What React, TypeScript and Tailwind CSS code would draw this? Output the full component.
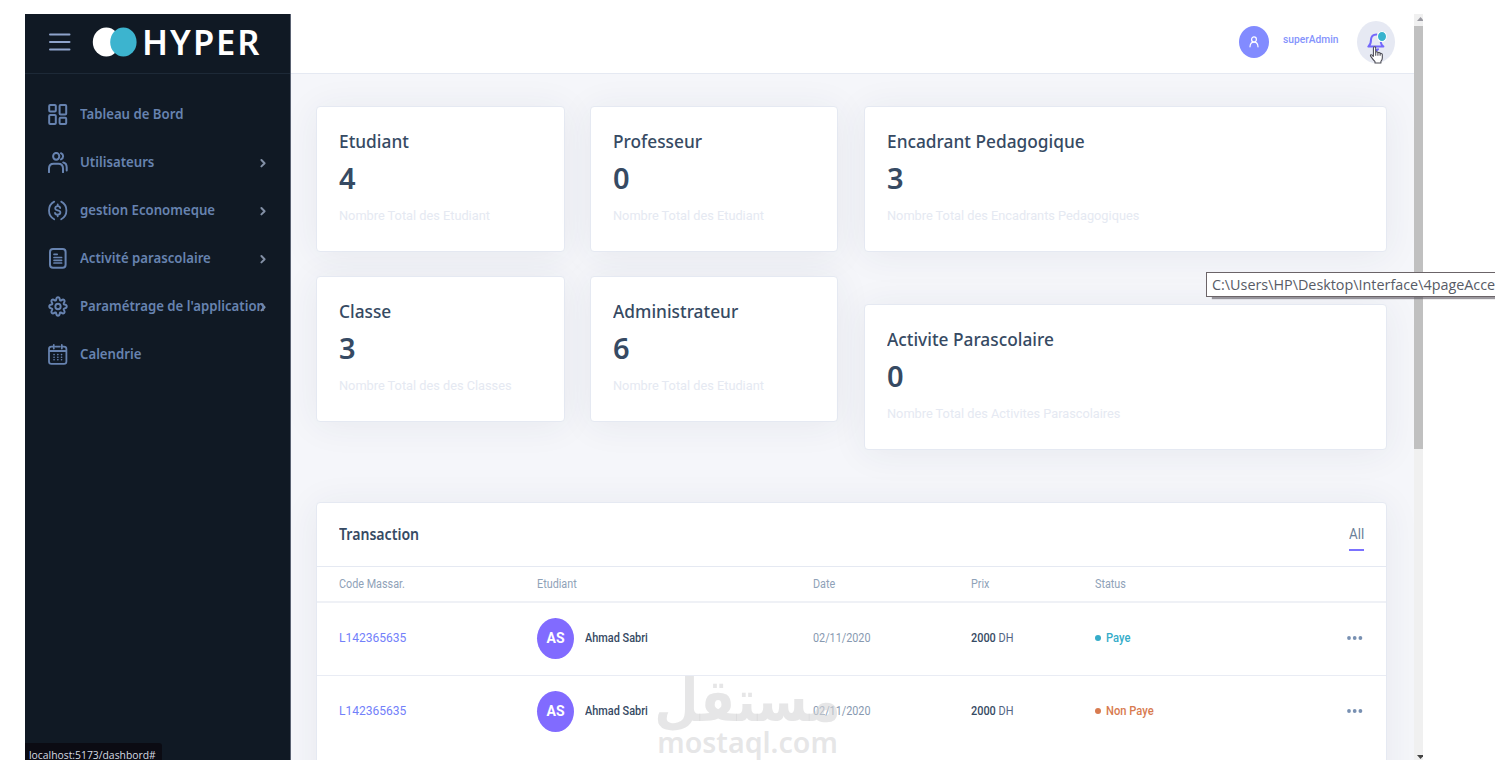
import type { ReactNode } from "react";

const stroke = {
  fill: "none",
  stroke: "currentColor",
  strokeWidth: 2,
  strokeLinecap: "round" as const,
  strokeLinejoin: "round" as const,
};

const DashboardIcon = () => (
  <svg viewBox="0 0 20 21" className="w-5 h-[21px]" {...stroke}>
    <rect x="1.2" y="1" width="6.6" height="6.6" rx="1" />
    <rect x="11.6" y="1" width="6.6" height="9.4" rx="1" />
    <rect x="1.2" y="11" width="6.6" height="9" rx="1" />
    <rect x="11.6" y="13.8" width="6.6" height="6.2" rx="1" />
  </svg>
);

const UsersIcon = () => (
  <svg viewBox="0 0 20 21" className="w-5 h-[21px]" {...stroke}>
    <ellipse cx="8.2" cy="4.3" rx="3.1" ry="3.4" />
    <path d="M1 20.2v-3.7q0-4.8 4.6-4.8h4.8q4.6 0 4.6 4.8v3.7" />
    <path d="M13 1.2a3.2 3.3 0 0 1 0 6.2M15.2 10.4q3.5.6 3.5 5v3" />
  </svg>
);

const MoneyIcon = () => (
  <svg viewBox="0 0 20 21" className="w-5 h-[21px]" {...stroke} strokeWidth={1.8}>
    <path d="M6.2 1.6Q1 4.4 1 10.4t5.2 8.8M13.2 1.6q5.2 2.8 5.2 8.8t-5.2 8.8" />
    <path d="M12.2 8q-.3-1.8-2.5-1.8T7.2 8.2q0 1.7 2.5 2.1 2.7.4 2.7 2.3 0 2-2.7 2-2.5 0-2.7-1.8M9.7 4.5v1.7M9.7 14.6v1.7" />
  </svg>
);

const ActivityIcon = () => (
  <svg viewBox="0 0 20 21" className="w-5 h-[21px]" {...stroke}>
    <rect x="2" y="1" width="15.6" height="18.8" rx="3" />
    <path d="M6 6.3h3.2M6 9.5h7.6M6 12.3h7.6M6 15h7.6" strokeWidth="1.7" />
  </svg>
);

const SettingsIcon = () => (
  <svg viewBox="0 0 24 24" className="w-5 h-[21px]" preserveAspectRatio="none" {...stroke} strokeWidth={2.3}>
    <circle cx="12" cy="12" r="3.2" />
    <path d="M9.8 4.2c.5-3.6 3.9-3.6 4.4 0 .2.9 1 1.2 1.8.8 2.8-2.2 5.2.2 3 3-.5.8-.1 1.6.8 1.8 3.6.5 3.6 3.9 0 4.4-.9.2-1.3 1-.8 1.8 2.2 2.8-.2 5.2-3 3-.8-.5-1.6-.1-1.8.8-.5 3.6-3.9 3.6-4.4 0-.2-.9-1-1.3-1.8-.8-2.8 2.2-5.2-.2-3-3 .5-.8.1-1.6-.8-1.8-3.6-.5-3.6-3.9 0-4.4.9-.2 1.3-1 .8-1.8-2.2-2.8.2-5.2 3-3 .8.4 1.6.1 1.8-.8z" />
  </svg>
);

const CalendarIcon = () => (
  <svg viewBox="0 0 20 21" className="w-5 h-[21px]" {...stroke}>
    <path d="M5.8 2.6H3.4Q1 2.6 1 5v12.4q0 2.4 2.4 2.4H16q2.4 0 2.4-2.4V5q0-2.4-2.4-2.4h-2.2M7.6 2.6h4.2M1 7h17.4M5.8 1v3.6M13.8 1v3.6" strokeWidth="1.8" />
    <path d="M6 10.6h.1M9.8 10.6h.1M13.5 10.6h.1M6 13.2h.1M9.8 13.2h.1M13.5 13.2h.1M6 15.8h.1M9.8 15.8h.1M13.5 15.8h.1" strokeWidth="1.6" />
  </svg>
);

const Chevron = () => (
  <svg viewBox="0 0 8 10" className="w-2 h-2.5 shrink-0 mt-0.5 text-[#8390a6]" {...stroke}>
    <path d="M2.4 2L5.6 5.2 2.4 8.4" />
  </svg>
);

const menu = [
  { name: "Tableau de Bord", icon: <DashboardIcon />, sub: false },
  { name: "Utilisateurs", icon: <UsersIcon />, sub: true },
  { name: "gestion Economeque", icon: <MoneyIcon />, sub: true },
  { name: "Activité parascolaire", icon: <ActivityIcon />, sub: true },
  { name: "Paramétrage de l'application", icon: <SettingsIcon />, sub: true },
  { name: "Calendrie", icon: <CalendarIcon />, sub: false },
];

const Sidebar = () => (
  <aside className="w-[266px] shrink-0 bg-[#101924] border-r border-[#5a6272] text-[#6783b0]">
    <div className="h-[60px] border-b border-[#1d2937] flex items-center pl-[24px] pb-[3px]">
      <svg viewBox="0 0 22 18" className="w-[22px] h-[18px] text-[#8ea3cb]" {...stroke}>
        <path d="M1 1.5h19.5M1 9h19.5M1 16.5h19.5" />
      </svg>
      <svg viewBox="0 0 45 30" className="w-[45px] h-[30px] ml-[21px]">
        <ellipse cx="14.3" cy="15" rx="13.5" ry="14.6" fill="#fff" />
        <ellipse cx="31.4" cy="15" rx="13.2" ry="14.6" fill="#3cb4cf" />
      </svg>
      <span className="ml-[5px] font-['Noto_Sans'] font-semibold text-[34.5px] leading-none tracking-[2px] text-white inline-block origin-left">
        HYPER
      </span>
    </div>
    <nav className="pt-4">
      {menu.map((item) => (
        <div key={item.name} className="h-12 flex items-center pl-[23px] pr-[23px]">
          {item.icon}
          <span className="ml-3 flex-1 w-0 whitespace-nowrap font-['Noto_Sans'] font-semibold text-[14.5px]">
            <span className="inline-block origin-left scale-x-[0.91]">{item.name}</span>
          </span>
          {item.sub && <Chevron />}
        </div>
      ))}
    </nav>
  </aside>
);

const Topbar = () => (
  <header className="h-[60px] shrink-0 bg-white border-b border-[#e5e9f2] flex items-center justify-end pr-[19px] pb-[4px]">
    <div className="w-[30px] h-8 rounded-[50%] bg-[#828bff] text-white flex items-center justify-center">
      <svg viewBox="0 0 10 12" className="w-2.5 h-3" {...stroke} strokeWidth={1.2}>
        <ellipse cx="5" cy="3.4" rx="2.4" ry="2.6" />
        <path d="M1 10.8q.2-4.6 4-4.6t4 4.6" />
      </svg>
    </div>
    <span className="ml-[14px] mb-[3px] w-[74px] whitespace-nowrap text-[11px] font-medium text-[#8493fd]">
      <span className="inline-block origin-left scale-x-[0.93]">superAdmin</span>
    </span>
    <div className="relative w-[38px] h-[42px] rounded-[50%] bg-[#e6e9f3] flex items-center justify-center text-[#7367fb]">
      <svg viewBox="0 0 18 20" className="w-[18px] h-5 mr-px" {...stroke}>
        <path d="M9.5 2.4Q4.4 2.6 4 7.4q.1 5-2.6 7.2h15q-2.2-1.6-2.6-4.2M7 17.2q2 2 4 0" />
      </svg>
      <span className="absolute left-[20px] top-[10px] w-[10px] h-[11px] rounded-[50%] bg-[#38b3ce] border border-white" />
      <svg viewBox="0 0 17 20" className="absolute left-[12px] top-[24px] w-[15px] h-[20px]" fill="#fff" stroke="#4b4b55" strokeWidth="1.2" strokeLinejoin="round">
        <path d="M5 12V2.3q0-1.6 1.3-1.6T7.6 2.3v5q0-1 1.3-.9t1.2 1.4q.2-.9 1.4-.7T12.6 8.6q.2-.6 1.3-.4t1.2 1.4v3.8q0 2-1.6 3.7v2H6.8v-1.6Q4.4 15 2.2 11.8q-1.2-1.6 0-2.1t2.8 2.3" />
        <path d="M7.6 7.3v3.5M10.1 8v2.8M12.6 8.6v2.2" fill="none" />
      </svg>
    </div>
  </header>
);

type StatProps = { title: string; value: number; note: string };

const Card = ({ className, children }: { className: string; children: ReactNode }) => (
  <div className={`bg-white border border-[#e5e9f2] rounded-[4px] shadow-[0_3px_36px_rgba(43,55,92,0.07)] ${className}`}>
    {children}
  </div>
);

const StatCard = ({ title, value, note }: StatProps) => (
  <Card className="h-[146px] px-[22px] pt-[20px] whitespace-nowrap">
    <h6 className="font-['Noto_Sans'] font-medium text-[18.5px] leading-7 text-[#364a63]">
      <span className="inline-block origin-left scale-x-[0.935]">{title}</span>
    </h6>
    <div className="mt-1 font-['Noto_Sans'] font-semibold text-[29px] leading-[38px] text-[#364a63]">{value}</div>
    <p className="mt-2 text-[13.5px] leading-5 text-[#e5e9f2]">
      <span className="inline-block origin-left scale-x-[0.945]">{note}</span>
    </p>
  </Card>
);

const stats = [
  { title: "Etudiant", value: 4, note: "Nombre Total des Etudiant" },
  { title: "Professeur", value: 0, note: "Nombre Total des Etudiant" },
  { title: "Classe", value: 3, note: "Nombre Total des des Classes" },
  { title: "Administrateur", value: 6, note: "Nombre Total des Etudiant" },
];

const wideStats = [
  { title: "Encadrant Pedagogique", value: 3, note: "Nombre Total des Encadrants Pedagogiques" },
  { title: "Activite Parascolaire", value: 0, note: "Nombre Total des Activites Parascolaires" },
];

const rows = [
  { id: 0, code: "L142365635", name: "Ahmad Sabri", date: "02/11/2020", price: 2000, paid: true },
  { id: 1, code: "L142365635", name: "Ahmad Sabri", date: "02/11/2020", price: 2000, paid: false },
];

const columns = "grid grid-cols-[198px_276px_158px_124px_252px_1fr] items-center pl-[22px] whitespace-nowrap";

const Transactions = () => (
  <Card className="mt-[52px] h-[300px]">
    <div className="h-[64px] flex items-center justify-between pl-[22px] pr-[22px] border-b border-[#e5e9f2]">
      <h6 className="font-['Noto_Sans'] font-semibold text-[15.5px] text-[#364a63]">
        <span className="inline-block origin-left scale-x-[0.91]">Transaction</span>
      </h6>
      <span className="self-start mt-[19px] w-[15px] h-[29px] border-b-2 border-[#7b72ff] text-[14px] leading-6 text-[#6b7f99]">
        <span className="inline-block origin-left scale-x-[0.95]">All</span>
      </span>
    </div>
    <div className={`${columns} h-[36px] border-b-2 border-[#eff1f6] text-[12px] text-[#8fa2b8]`}>
      {["Code Massar.", "Etudiant", "Date", "Prix", "Status"].map((label) => (
        <span key={label}>
          <span className="inline-block origin-left scale-x-[0.9]">{label}</span>
        </span>
      ))}
    </div>
    {rows.map((row) => (
      <div key={row.id} className={`${columns} h-[72.5px] pb-px text-[12px] border-b border-[#e9ecf4] last:border-b-0`}>
        <span className="text-[13px] leading-[18px] text-[#7280fa]">
          <span className="inline-block origin-left scale-x-[0.925]">{row.code}</span>
        </span>
        <span className="flex items-center">
          <span className="w-[37px] h-[41px] rounded-[50%] bg-[#816bff] text-white text-[14px] font-bold flex items-center justify-center">
            AS
          </span>
          <span className="ml-[11px] font-medium text-[#364a63] inline-block origin-left scale-x-[0.91]">{row.name}</span>
        </span>
        <span className="text-[#8799b0]">
          <span className="inline-block origin-left scale-x-[0.9]">{row.date}</span>
        </span>
        <span className="text-[#526484]">
          <span className="inline-block origin-left scale-x-[0.91]">
            <span className="font-medium text-[#364a63]">{row.price}</span> DH
          </span>
        </span>
        <span className={`flex items-center font-medium ${row.paid ? "text-[#35acc9]" : "text-[#d87b50]"}`}>
          <span className="w-1.5 h-1.5 rounded-full bg-current mr-[5px]" />
          <span className="inline-block origin-left scale-x-[0.93]">{row.paid ? "Paye" : "Non Paye"}</span>
        </span>
        <svg viewBox="0 0 16 4" className="w-4 h-1" fill="#7890b2">
          <circle cx="2" cy="2" r="1.9" />
          <circle cx="7.7" cy="2" r="1.9" />
          <circle cx="13.4" cy="2" r="1.9" />
        </svg>
      </div>
    ))}
  </Card>
);

const Scrollbar = () => (
  <div className="w-[9px] shrink-0 bg-[#f0f0f0] flex flex-col items-center justify-between overflow-hidden">
    <div className="w-full">
      <svg viewBox="0 0 9 12" className="w-[9px] h-3">
        <path d="M3 7l3.5-4L10 7z" fill="#9a9aa2" />
      </svg>
      <div className="h-[423px] bg-[#c0c0c0]" />
    </div>
    <svg viewBox="0 0 9 8" className="w-[9px] h-2">
      <path d="M3 3h7L6.5 7z" fill="#444" />
    </svg>
  </div>
);

const Watermark = () => (
  <div className="absolute left-[657px] top-[674px] w-[181px] flex flex-col items-center text-[#d5d5d7]/60">
    <div dir="rtl" className="font-['DejaVu_Sans'] font-bold text-[51px] leading-[54px] h-[54px] whitespace-nowrap scale-y-[1.15]">مستقل</div>
    <div className="font-['Noto_Sans'] font-semibold text-[28px] leading-7 whitespace-nowrap scale-x-[1.02]">mostaql.com</div>
  </div>
);

export default function App() {
  return (
    <div className="relative w-[1495px] h-[775px] overflow-hidden bg-white pl-[25px] pt-[14px] font-['Roboto',sans-serif]">
      <div className="relative w-[1398px] h-[746px] flex overflow-hidden">
        <Sidebar />
        <div className="flex-1 min-w-0 flex flex-col bg-[#f5f6fa]">
          <Topbar />
          <main className="flex-1 min-h-0 overflow-hidden pl-[25px] pr-[27px] pt-[32px]">
            <div className="flex gap-[26px]">
              <div className="grid grid-cols-[249px_248px] gap-x-[25px] gap-y-[24px] content-start">
                {stats.map((item) => (
                  <StatCard key={item.title} {...item} />
                ))}
              </div>
              <div className="flex-1 flex flex-col gap-[52px]">
                {wideStats.map((item) => (
                  <StatCard key={item.title} {...item} />
                ))}
              </div>
            </div>
            <Transactions />
          </main>
        </div>
        <Scrollbar />
        <div className="absolute left-0 bottom-0 w-[137px] h-[17px] bg-[#0b0b13] rounded-tr-[3px] pl-1 whitespace-nowrap text-[#d6dae2] font-['Open_Sans'] text-[11.5px] leading-[23px]">
          <span className="inline-block origin-left scale-x-[0.9]">localhost:5173/dashbord#</span>
        </div>
      </div>
      <Watermark />
      <div className="absolute left-[1206px] top-[272px] w-[300px] h-[25px] bg-white border border-[#6b6468] shadow-[6px_2px_1px_rgba(90,85,95,0.6)] pl-[5px] whitespace-nowrap font-['Open_Sans'] text-[14.5px] leading-[23px] text-[#575b66]">
        <span className="inline-block origin-left scale-x-[0.99]">C:\Users\HP\Desktop\Interface\4pageAcce</span>
      </div>
    </div>
  );
}
